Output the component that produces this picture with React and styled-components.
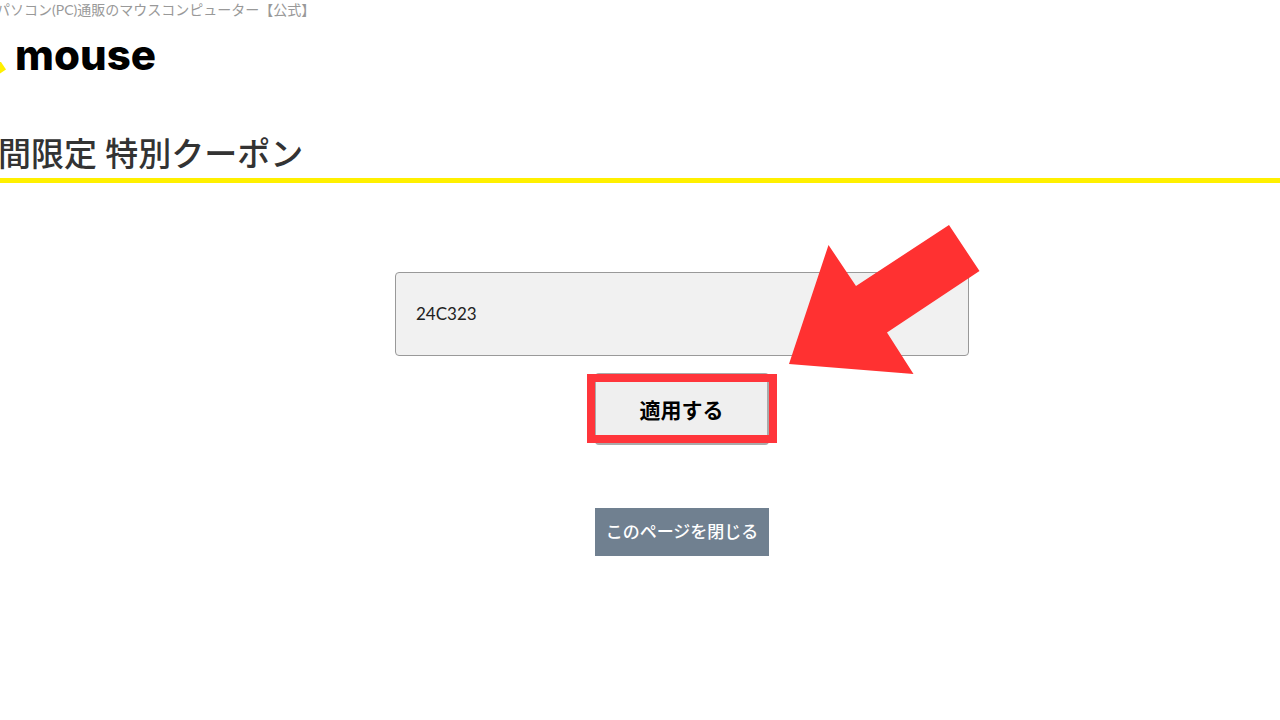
import React from "react"
import styled, { createGlobalStyle } from "styled-components"

const GlobalStyle = createGlobalStyle`
    * {
        box-sizing: border-box;
    }

    body {
        margin: 0;
        background: #fff;
        color: #333;
        font-family: Lato, 'Noto Sans CJK JP', sans-serif;
    }
`

const Page = styled.div`
    overflow: hidden;
`

const Tagline = styled.p`
    margin: 0 0 0 -4px;
    font-size: 14px;
    line-height: 20px;
    color: #999;
    white-space: nowrap;
`

const LogoLink = styled.a`
    display: flex;
    align-items: center;
    height: 60px;
    margin-top: 5px;
    color: #000;
    text-decoration: none;
`

const LogoMark = styled.svg`
    width: 15px;
    height: 60px;
`

const LogoName = styled.span`
    font-family: Inter, sans-serif;
    font-size: 42px;
    font-weight: 800;
    line-height: 56px;
`

const Title = styled.h1`
    margin: 44px 0 0;
    padding-bottom: 1px;
    border-bottom: 5px solid #fff000;
    text-indent: -2px;
    font-size: 33px;
    font-weight: 500;
    line-height: 48px;
    white-space: nowrap;
`

const CouponForm = styled.form`
    display: flex;
    flex-direction: column;
    align-items: center;
    padding: 89px 0 0 84px;
`

const CodeField = styled.div`
    position: relative;
    width: 48%;
`

const CodeInput = styled.input`
    display: block;
    width: 100%;
    height: 84px;
    padding: 0 20px 2px;
    border: 1px solid #999;
    border-radius: 4px;
    background: #f1f1f1;
    color: #222;
    font-family: inherit;
    font-size: 17px;
    outline: none;
`

const Arrow = styled.svg`
    position: absolute;
    top: -48px;
    right: -11px;
    z-index: 1;
    width: 192px;
    height: 150px;
    pointer-events: none;
`

const ApplyField = styled.div`
    position: relative;
    margin-top: 17px;
`

const Highlight = styled.span`
    position: absolute;
    inset: 1px -8px 2px;
    border: 8px solid #ff353b;
    pointer-events: none;
`

const ApplyButton = styled.button`
    display: block;
    width: 174px;
    height: 72px;
    padding: 0;
    border: 2px solid #aaa;
    border-left-width: 1px;
    border-radius: 4px;
    background: #efefef;
    color: #000;
    font-family: inherit;
    font-size: 21px;
    font-weight: 700;
    cursor: pointer;
`

const CloseButton = styled.button`
    width: 174px;
    height: 48px;
    margin-top: 63px;
    padding: 0 0 4px;
    border: 0;
    background: #708090;
    color: #fff;
    font-family: inherit;
    font-size: 17px;
    font-weight: 500;
    white-space: nowrap;
    cursor: pointer;
`

function Header() {
    return (
        <header>
            <Tagline>パソコン(PC)通販のマウスコンピューター【公式】</Tagline>
            <LogoLink href="#">
                <LogoMark viewBox="0 0 15 60" aria-hidden="true">
                    <path d="M0 37L1 37L6 44.500L0 48.500Z" fill="#fff000" />
                </LogoMark>
                <LogoName>mouse</LogoName>
            </LogoLink>
        </header>
    )
}

export default function App() {
    return (
        <Page>
            <GlobalStyle />
            <Header />
            <main>
                <Title>間限定 特別クーポン</Title>
                <CouponForm onSubmit={(e) => e.preventDefault()}>
                    <CodeField>
                        <CodeInput type="text" aria-label="クーポンコード" defaultValue="24C323" />
                        <Arrow viewBox="0 0 192 150" aria-hidden="true">
                            <path d="M161 1L191.500 47L99 108.500L125.500 150L1 140L40.500 21L68 62Z" fill="#ff3131" />
                        </Arrow>
                    </CodeField>
                    <ApplyField>
                        <ApplyButton type="submit">適用する</ApplyButton>
                        <Highlight />
                    </ApplyField>
                    <CloseButton type="button">このページを閉じる</CloseButton>
                </CouponForm>
            </main>
        </Page>
    )
}
